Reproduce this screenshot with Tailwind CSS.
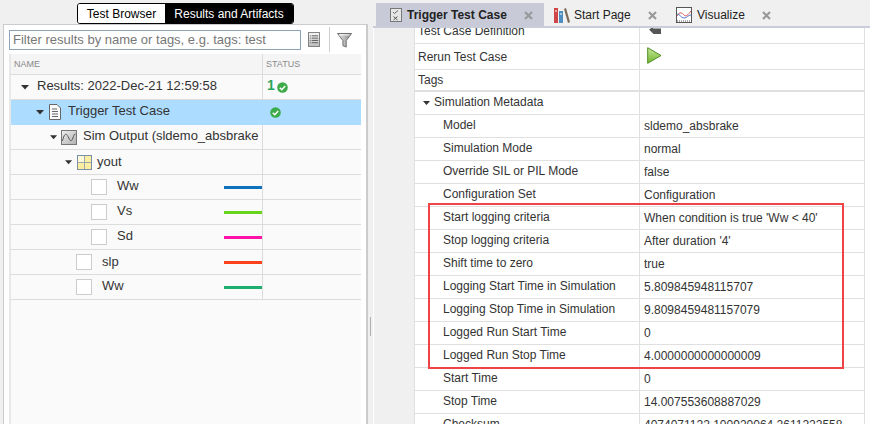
<!DOCTYPE html>
<html>
<head>
<meta charset="utf-8">
<script src="https://cdn.jsdelivr.net/npm/@tailwindcss/browser@4"></script>
</head>
<body class="m-0">
<div class="flex w-[870px] h-[424px] overflow-hidden bg-[#f0f0f0] font-['Liberation_Sans',Arial,sans-serif] text-xs text-[#333]">

  <!-- LEFT PANE -->
  <div class="w-[368px] shrink-0 flex flex-col pl-[3px]">
    <div class="h-[24px] pt-[3px] flex justify-center shrink-0">
      <div class="flex h-[21px] w-[217px] rounded-[3px] border border-black overflow-hidden">
        <div class="w-[87px] bg-white text-black flex items-center justify-center">Test Browser</div>
        <div class="flex-1 bg-black text-white flex items-center justify-center">Results and Artifacts</div>
      </div>
    </div>
    <div class="flex-1 flex flex-col bg-white border-l border-r-2 border-t border-[#cccccc] pl-[5px] pr-[5px] min-h-0">
      <div class="h-[29px] shrink-0 flex items-center">
        <div class="w-[292px] h-[20px] border border-[#8fa3b8] bg-white flex items-center pl-[3px] text-[13px] text-[#777] whitespace-nowrap overflow-hidden">Filter results by name or tags, e.g. tags: test</div>
        <svg class="ml-[7px]" width="12" height="15" viewBox="0 0 13 16"><defs><linearGradient id="g1" x1="0" y1="0" x2="0" y2="1"><stop offset="0" stop-color="#fafafa"/><stop offset="1" stop-color="#bdbdbd"/></linearGradient></defs><rect x=".5" y=".5" width="12" height="15" fill="url(#g1)" stroke="#777"/><path d="M2 4h1M4 4h7M2 6.500h1M4 6.500h7M2 9h1M4 9h7M2 11.500h1M4 11.500h7" stroke="#555" stroke-width="1"/></svg>
        <div class="w-px h-[25px] bg-[#ccc] ml-[9px]"></div>
        <svg class="ml-[7px] mt-[2px]" width="15" height="17" viewBox="0 0 16 17"><defs><linearGradient id="g2" x1="0" y1="0" x2="1" y2="0"><stop offset="0" stop-color="#eee"/><stop offset="1" stop-color="#888"/></linearGradient></defs><path d="M.5 1h15L9.800 8.500v7l-3.500-1.500V8.500z" fill="url(#g2)" stroke="#666"/><path d="M2.500 2.500h11" stroke="#fff"/></svg>
      </div>
      <div class="flex-1 flex flex-col bg-[#fafafa] border-l-2 border-[#e8e8e8] min-h-0 text-[13px]">
        <div class="h-[21px] shrink-0 flex border-b border-[#dcdcdc] bg-[#f5f5f5] text-[9px] text-[#8a8a8a]">
          <div class="w-[252px] border-r border-[#dcdcdc] flex items-center pl-[3px]">NAME</div>
          <div class="flex-1 flex items-center pl-[3px]">STATUS</div>
        </div>
        <div class="h-[25px] shrink-0 flex border-b border-[#dcdcdc]">
          <div class="w-[252px] border-r border-[#dcdcdc] flex items-center pl-[10px] pb-[3px]">
            <svg class="mt-[3px]" width="9" height="5" viewBox="0 0 9 5"><path d="M0 0h8L4 4.500z" fill="#333"/></svg>
            <span class="ml-[7px] whitespace-nowrap">Results: 2022-Dec-21 12:59:58</span>
          </div>
          <div class="flex-1 flex items-center pl-[4px]">
            <span class="text-[#2aa55a] text-[14px] font-bold pb-[3px]">1</span>
            <svg class="ml-[2px] mt-[1px]" width="11" height="11" viewBox="0 0 11 11"><circle cx="5.500" cy="5.500" r="5.300" fill="#3dab4a"/><path d="M2.800 5.700l2 2 3.400-3.800" stroke="#fff" stroke-width="1.500" fill="none"/></svg>
          </div>
        </div>
        <div class="h-[25px] shrink-0 flex bg-[#acdcff] border-b border-[#acdcff]">
          <div class="w-[252px] border-r border-[#acdcff] flex items-center pl-[25px]">
            <svg class="shrink-0" width="9" height="5" viewBox="0 0 9 5"><path d="M0 0h8L4 4.500z" fill="#333"/></svg>
            <svg class="ml-[4px] shrink-0" width="12" height="16" viewBox="0 0 12 16"><path d="M.5.500h7.500l3.500 3.500v11.500H.5z" fill="#fafafa" stroke="#666"/><path d="M3 5h5M3 7.500h6M3 10h6M3 12.500h6" stroke="#666"/></svg>
            <span class="ml-[7px] whitespace-nowrap pb-[3px]">Trigger Test Case</span>
          </div>
          <div class="flex-1 flex items-center pl-[7px]">
            <svg width="11" height="11" viewBox="0 0 11 11"><circle cx="5.500" cy="5.500" r="5.300" fill="#3dab4a"/><path d="M2.800 5.700l2 2 3.400-3.800" stroke="#fff" stroke-width="1.500" fill="none"/></svg>
          </div>
        </div>
        <div class="h-[25px] shrink-0 flex border-b border-[#dcdcdc]">
          <div class="w-[252px] border-r border-[#dcdcdc] flex items-center pl-[39px] overflow-hidden">
            <svg class="shrink-0" width="8" height="5" viewBox="0 0 9 5"><path d="M0 0h8L4 4.500z" fill="#333"/></svg>
            <svg class="ml-[3px] shrink-0" width="16" height="15" viewBox="0 0 16 15"><defs><linearGradient id="g3" x1="0" y1="0" x2="1" y2="1"><stop offset="0" stop-color="#f0f0f0"/><stop offset="1" stop-color="#b0b0b0"/></linearGradient></defs><rect x=".5" y=".5" width="15" height="14" fill="url(#g3)" stroke="#777"/><path d="M1.500 11C3 4 5 2.500 7 6.500S10 12.500 11.500 9 13 4 14.500 4" stroke="#555" fill="none"/></svg>
            <span class="ml-[6px] whitespace-nowrap pb-[3px]">Sim Output (sldemo_absbrake</span>
          </div>
          <div class="flex-1"></div>
        </div>
        <div class="h-[25px] shrink-0 flex border-b border-[#dcdcdc]">
          <div class="w-[252px] border-r border-[#dcdcdc] flex items-center pl-[54px]">
            <svg class="shrink-0" width="8" height="5" viewBox="0 0 9 5"><path d="M0 0h8L4 4.500z" fill="#333"/></svg>
            <svg class="ml-[4px] shrink-0" width="15" height="15" viewBox="0 0 15 15"><rect x=".5" y=".5" width="14" height="14" fill="#fbeea0" stroke="#7a8fa8"/><rect x="1" y="1" width="6" height="6" fill="#fdf8d8"/><path d="M7.500 1v13M1 7.500h13" stroke="#9aa8b0"/></svg>
            <span class="ml-[5px] pb-[1px]">yout</span>
          </div>
          <div class="flex-1"></div>
        </div>
        <div class="h-[25px] shrink-0 flex border-b border-[#dcdcdc]">
          <div class="w-[252px] border-r border-[#dcdcdc] flex items-center pl-[80px]">
            <span class="w-4 h-4 bg-white border border-[#cccccc] shrink-0"></span>
            <span class="ml-[10px] pb-[2px]">Ww</span>
            <span class="ml-auto w-[38px] h-[3px] bg-[#0f72bd]"></span>
          </div>
          <div class="flex-1"></div>
        </div>
        <div class="h-[25px] shrink-0 flex border-b border-[#dcdcdc]">
          <div class="w-[252px] border-r border-[#dcdcdc] flex items-center pl-[80px]">
            <span class="w-4 h-4 bg-white border border-[#cccccc] shrink-0"></span>
            <span class="ml-[10px] pb-[2px]">Vs</span>
            <span class="ml-auto w-[38px] h-[3px] bg-[#66d41a]"></span>
          </div>
          <div class="flex-1"></div>
        </div>
        <div class="h-[25px] shrink-0 flex border-b border-[#dcdcdc]">
          <div class="w-[252px] border-r border-[#dcdcdc] flex items-center pl-[80px]">
            <span class="w-4 h-4 bg-white border border-[#cccccc] shrink-0"></span>
            <span class="ml-[10px] pb-[2px]">Sd</span>
            <span class="ml-auto w-[38px] h-[3px] bg-[#ff12a8]"></span>
          </div>
          <div class="flex-1"></div>
        </div>
        <div class="h-[25px] shrink-0 flex border-b border-[#dcdcdc]">
          <div class="w-[252px] border-r border-[#dcdcdc] flex items-center pl-[65px]">
            <span class="w-4 h-4 bg-white border border-[#cccccc] shrink-0"></span>
            <span class="ml-[10px] pb-[1px]">slp</span>
            <span class="ml-auto w-[38px] h-[3px] bg-[#fa4119]"></span>
          </div>
          <div class="flex-1"></div>
        </div>
        <div class="h-[25px] shrink-0 flex border-b border-[#dcdcdc]">
          <div class="w-[252px] border-r border-[#dcdcdc] flex items-center pl-[65px]">
            <span class="w-4 h-4 bg-white border border-[#cccccc] shrink-0"></span>
            <span class="ml-[10px] pb-[2px]">Ww</span>
            <span class="ml-auto w-[38px] h-[3px] bg-[#1eaf6e]"></span>
          </div>
          <div class="flex-1"></div>
        </div>
      </div>
    </div>
  </div>

  <!-- SPLITTER -->
  <div class="w-[5px] shrink-0 flex flex-col pl-[2px]">
    <div class="mt-[317px] w-px h-[19px] bg-[#b0b0b0]"></div>
  </div>

  <!-- RIGHT PANE -->
  <div class="flex-1 flex flex-col min-w-0">
    <div class="h-[28px] shrink-0 pt-[3px] border-b-2 border-[#c9ccd9] flex">
      <div class="ml-[3px] w-[168px] h-[23px] bg-[#c9cad8] flex items-center pl-[14px] text-[#222]">
        <svg width="12" height="14" viewBox="0 0 12 14"><rect x=".5" y=".5" width="11" height="13" fill="#e6e6e6" stroke="#777"/><path d="M3 4l1.500 1.500L8 2.500" stroke="#666" fill="none"/><path d="M3.500 8.500l4 3.500m0-3.500l-4 3.500" stroke="#555"/></svg>
        <span class="ml-[5px] font-bold">Trigger Test Case</span>
        <svg class="ml-[17px] mt-[1px]" width="9" height="9" viewBox="0 0 9 9"><path d="M1 1l7 7m0-7l-7 7" stroke="#999" stroke-width="2.200"/></svg>
      </div>
      <div class="flex items-center pl-[10px] w-[132px] h-[23px] text-[#222]">
        <svg width="16" height="16" viewBox="0 0 16 16"><rect x="0" y="1" width="4" height="15" fill="#d04545"/><rect x="5" y="4" width="4" height="12" fill="#4f8fbf"/><path d="M10 2l2-1 4 14-2 1z" fill="#7a6a5a"/><path d="M1 4h2M6 7h2" stroke="#fff"/></svg>
        <span class="ml-[4px]">Start Page</span>
        <svg class="ml-[17px] mt-[1px]" width="9" height="9" viewBox="0 0 9 9"><path d="M1 1l7 7m0-7l-7 7" stroke="#999" stroke-width="2.200"/></svg>
      </div>
      <div class="flex items-center text-[#222]">
        <svg width="16" height="16" viewBox="0 0 16 16"><rect x=".5" y=".5" width="15" height="15" fill="#fff" stroke="#555"/><path d="M1 9c3-5 5-3 7-1s4 0 7-4" stroke="#d9534f" fill="none"/><path d="M1 7c3 0 4 4 7 4s4-3 7-3" stroke="#4f7fcf" fill="none"/><path d="M1 14h14" stroke="#555" stroke-dasharray="1 1"/></svg>
        <span class="ml-[5px]">Visualize</span>
        <svg class="ml-[17px] mt-[1px]" width="9" height="9" viewBox="0 0 9 9"><path d="M1 1l7 7m0-7l-7 7" stroke="#999" stroke-width="2.200"/></svg>
      </div>
    </div>
    <div class="flex-1 flex min-h-0">
      <div class="w-px shrink-0 bg-white"></div>
      <div class="w-[40px] shrink-0"></div>
      <div class="flex-1 bg-white relative pr-[5px]">
        <div class="border-l border-r border-[#e0e0e0] relative">
          <div class="h-[16px] flex border-b border-[#e0e0e0] overflow-hidden">
            <div class="w-[225px] border-r border-[#e0e0e0] pl-[3px] mt-[-6px] leading-[18px] whitespace-nowrap">Test Case Definition</div>
            <div class="flex-1 pl-[9px]"><svg width="12" height="7" viewBox="0 0 12 7"><path d="M0 2.500L4 0v1.500h8V7H4.500L3 5.500z" fill="#555" transform="translate(0 -1)"/></svg></div>
          </div>
          <div class="h-[26px] flex border-b border-[#e0e0e0]">
            <div class="w-[225px] border-r border-[#e0e0e0] pl-[3px] flex items-center pt-[1px]">Rerun Test Case</div>
            <div class="flex-1 pl-[7px] pt-[3px]"><svg width="15" height="17" viewBox="0 0 15 17"><defs><linearGradient id="g4" x1="0" y1="0" x2="0" y2="1"><stop offset="0" stop-color="#c8e89a"/><stop offset="1" stop-color="#6fb52c"/></linearGradient></defs><path d="M.7.700L14 8.500.7 16.300z" fill="url(#g4)" stroke="#4f8f25"/></svg></div>
          </div>
          <div class="h-[22px] flex border-b-2 border-[#e0e0e0]">
            <div class="w-[225px] border-r border-[#e0e0e0] pl-[3px] flex items-center">Tags</div>
            <div class="flex-1"></div>
          </div>
          <div class="h-[23px] flex border-b border-[#e0e0e0]">
            <div class="w-[225px] border-r border-[#e0e0e0] pl-[8px] flex items-center">
              <svg width="7" height="4" viewBox="0 0 7 4"><path d="M0 0h7L3.500 4z" fill="#333"/></svg>
              <span class="ml-[4px] pb-[2px]">Simulation Metadata</span>
            </div>
            <div class="flex-1"></div>
          </div>
          <div class="h-[23px] flex border-b border-[#e0e0e0]"><div class="w-[225px] border-r border-[#e0e0e0] pl-[28px] flex items-center pb-[2px]">Model</div><div class="flex-1 pl-[4px] flex items-center">sldemo_absbrake</div></div>
          <div class="h-[23px] flex border-b border-[#e0e0e0]"><div class="w-[225px] border-r border-[#e0e0e0] pl-[28px] flex items-center pb-[2px]">Simulation Mode</div><div class="flex-1 pl-[4px] flex items-center">normal</div></div>
          <div class="h-[23px] flex border-b border-[#e0e0e0]"><div class="w-[225px] border-r border-[#e0e0e0] pl-[28px] flex items-center pb-[2px]">Override SIL or PIL Mode</div><div class="flex-1 pl-[4px] flex items-center">false</div></div>
          <div class="h-[23px] flex border-b border-[#e0e0e0]"><div class="w-[225px] border-r border-[#e0e0e0] pl-[28px] flex items-center pb-[2px]">Configuration Set</div><div class="flex-1 pl-[4px] flex items-center">Configuration</div></div>
          <div class="h-[23px] flex border-b border-[#e0e0e0]"><div class="w-[225px] border-r border-[#e0e0e0] pl-[28px] flex items-center pb-[2px]">Start logging criteria</div><div class="flex-1 pl-[4px] flex items-center">When condition is true 'Ww &lt; 40'</div></div>
          <div class="h-[23px] flex border-b border-[#e0e0e0]"><div class="w-[225px] border-r border-[#e0e0e0] pl-[28px] flex items-center pb-[2px]">Stop logging criteria</div><div class="flex-1 pl-[4px] flex items-center">After duration '4'</div></div>
          <div class="h-[23px] flex border-b border-[#e0e0e0]"><div class="w-[225px] border-r border-[#e0e0e0] pl-[28px] flex items-center pb-[2px]">Shift time to zero</div><div class="flex-1 pl-[4px] flex items-center">true</div></div>
          <div class="h-[23px] flex border-b border-[#e0e0e0]"><div class="w-[225px] border-r border-[#e0e0e0] pl-[28px] flex items-center pb-[2px]">Logging Start Time in Simulation</div><div class="flex-1 pl-[4px] flex items-center">5.809845948115707</div></div>
          <div class="h-[23px] flex border-b border-[#e0e0e0]"><div class="w-[225px] border-r border-[#e0e0e0] pl-[28px] flex items-center pb-[2px]">Logging Stop Time in Simulation</div><div class="flex-1 pl-[4px] flex items-center">9.8098459481157079</div></div>
          <div class="h-[23px] flex border-b border-[#e0e0e0]"><div class="w-[225px] border-r border-[#e0e0e0] pl-[28px] flex items-center pb-[2px]">Logged Run Start Time</div><div class="flex-1 pl-[4px] flex items-center">0</div></div>
          <div class="h-[23px] flex border-b border-[#e0e0e0]"><div class="w-[225px] border-r border-[#e0e0e0] pl-[28px] flex items-center pb-[2px]">Logged Run Stop Time</div><div class="flex-1 pl-[4px] flex items-center">4.0000000000000009</div></div>
          <div class="h-[23px] flex border-b border-[#e0e0e0]"><div class="w-[225px] border-r border-[#e0e0e0] pl-[28px] flex items-center pb-[2px]">Start Time</div><div class="flex-1 pl-[4px] flex items-center">0</div></div>
          <div class="h-[23px] flex border-b border-[#e0e0e0]"><div class="w-[225px] border-r border-[#e0e0e0] pl-[28px] flex items-center pb-[2px]">Stop Time</div><div class="flex-1 pl-[4px] flex items-center">14.007553608887029</div></div>
          <div class="h-[23px] flex border-b border-[#e0e0e0]"><div class="w-[225px] border-r border-[#e0e0e0] pl-[28px] flex items-center pb-[2px]">Checksum</div><div class="flex-1 pl-[4px] flex items-center whitespace-nowrap">4074071122 100920064 2611222558</div></div>
          <!-- annotation overlay -->
          <div class="absolute left-[13px] top-[175px] w-[416px] h-[166px] border-2 border-[#f04347] pointer-events-none"></div>
        </div>
      </div>
    </div>
  </div>
</div>
</body>
</html>
